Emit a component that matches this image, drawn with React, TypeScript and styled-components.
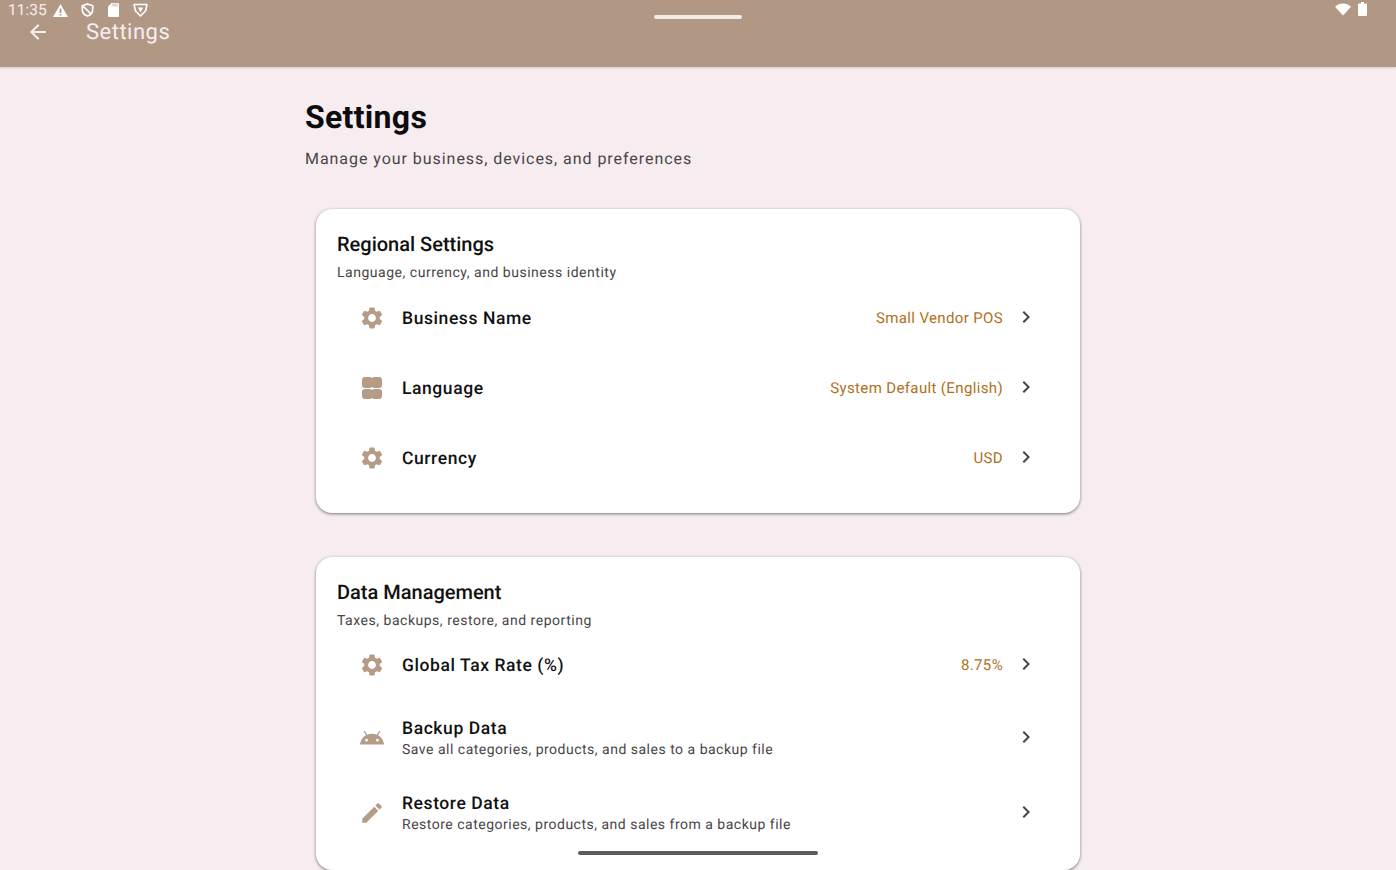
import React from 'react';
import styled, { createGlobalStyle } from 'styled-components';
import { MdAndroid, MdArrowBack, MdChevronRight, MdEdit, MdSettings } from 'react-icons/md';

const GlobalStyle = createGlobalStyle`
html, body {
  margin: 0;
  height: 100%;
  overflow: hidden;
  background: #f7edf1;
  font-family: Roboto, "Liberation Sans", sans-serif;
  text-rendering: geometricPrecision;
}
`;

const Screen = styled.div`
position: relative;
height: 870px;
overflow: hidden;
`;

const AppBar = styled.header`
position: relative;
height: 67px;
background: #b09884;
box-shadow: 0 1px 2px rgba(0, 0, 0, 0.15);
box-sizing: border-box;
padding: 20px 0 0 26px;
display: flex;
align-items: flex-start;
gap: 36px;
color: #f7edf1;
`;

const BackIcon = styled(MdArrowBack)`
width: 24px;
height: 24px;
flex: none;
`;

const AppBarTitle = styled.div`
font-size: 22px;
line-height: 24px;
letter-spacing: 0.5px;
margin-top: 1px;
`;

const StatusLeft = styled.div`
position: absolute;
left: 8px;
top: 0;
height: 20px;
display: flex;
align-items: center;
color: #fff;
`;

const Clock = styled.span`
font-size: 15.5px;
margin-right: 6px;
color: #f7edf1;
`;

const StatusSlot = styled.svg<{ $gap?: number }>`
display: block;
margin-right: ${p => p.$gap ?? 0}px;
`;

const StatusRight = styled.div`
position: absolute;
right: 29px;
top: 2px;
display: flex;
align-items: center;
gap: 7px;
`;

const TopPill = styled.div`
position: absolute;
left: 654px;
top: 15px;
width: 88px;
height: 4px;
border-radius: 2px;
background: #f3ebe8;
`;

const HomeHandle = styled.div`
position: absolute;
left: 578px;
top: 851px;
width: 240px;
height: 4px;
border-radius: 2px;
background: #5c5c5c;
`;

const Content = styled.main`
width: 786px;
margin: 0 auto;
padding-top: 31px;
`;

const PageTitle = styled.h1`
margin: 0;
font-size: 32px;
line-height: 38px;
font-weight: 700;
letter-spacing: 0.3px;
color: #0c0c0c;
`;

const PageSubtitle = styled.p`
margin: 12.4px 0 0;
font-size: 16px;
line-height: 22px;
letter-spacing: 0.95px;
color: #4a4448;
`;

const Card = styled.section`
margin: 39px 11px 44px;
background: #fff;
border-radius: 16px;
padding: 21px 21px 20px;
box-shadow: 0 1px 3px 1px rgba(0, 0, 0, 0.2), 0 1px 2px rgba(0, 0, 0, 0.25);

& + & {
  margin-top: 44px;
}
`;

const CardTitle = styled.h2`
margin: 0;
font-size: 20px;
line-height: 28px;
font-weight: 500;
color: #111;
`;

const CardSubtitle = styled.p`
margin: 5px 0 -0.5px;
font-size: 14px;
line-height: 20px;
letter-spacing: 0.52px;
color: #4a4448;
`;

const Row = styled.div<{ $tall?: boolean }>`
height: ${p => (p.$tall ? 75 : 70)}px;
display: flex;
align-items: center;
padding: 0 21px 0 16px;
`;

const RowIcon = styled.div`
width: 38px;
margin-right: 11px;
display: flex;
justify-content: center;
color: #b59c87;
flex: none;

svg {
  display: block;
  width: 26px;
  height: 26px;
}
`;

const RowText = styled.div`
flex: 1;
min-width: 0;
margin-top: 2px;
`;

const RowLabel = styled.div`
font-size: 17.5px;
line-height: 22px;
font-weight: 500;
letter-spacing: 0.58px;
color: #111;
`;

const RowHint = styled.div`
font-size: 14px;
line-height: 20px;
letter-spacing: 0.5px;
color: #4a4448;
`;

const RowValue = styled.span`
font-size: 15px;
letter-spacing: 0.36px;
color: #b0701b;
margin-right: 11px;
`;

const Chevron = styled(MdChevronRight)`
width: 24px;
height: 24px;
color: #4a4448;
flex: none;
margin-top: -2px;
`;

const TilesIcon = () => (
  <svg viewBox="0 0 26 26" fill="currentColor">
    <rect x="3" y="2" width="10.500" height="11" rx="3" />
    <rect x="12.500" y="2" width="10.500" height="11" rx="3" />
    <rect x="3" y="14" width="10.500" height="10" rx="3" />
    <rect x="12.500" y="14" width="10.500" height="10" rx="3" />
  </svg>
);

type RowData = {
  icon: React.ReactNode;
  label: string;
  hint?: string;
  value?: string;
};

const regional: RowData[] = [
  { icon: <MdSettings />, label: 'Business Name', value: 'Small Vendor POS' },
  { icon: <TilesIcon />, label: 'Language', value: 'System Default (English)' },
  { icon: <MdSettings />, label: 'Currency', value: 'USD' },
];

const data: RowData[] = [
  { icon: <MdSettings />, label: 'Global Tax Rate (%)', value: '8.75%' },
  { icon: <MdAndroid />, label: 'Backup Data', hint: 'Save all categories, products, and sales to a backup file' },
  { icon: <MdEdit />, label: 'Restore Data', hint: 'Restore categories, products, and sales from a backup file' },
];

const SettingsRow: React.FC<RowData> = ({ icon, label, hint, value }) => (
  <Row $tall={!!hint}>
    <RowIcon>{icon}</RowIcon>
    <RowText>
      <RowLabel>{label}</RowLabel>
      {hint && <RowHint>{hint}</RowHint>}
    </RowText>
    {value && <RowValue>{value}</RowValue>}
    <Chevron />
  </Row>
);

export default function App() {
  return (
    <Screen>
      <GlobalStyle />
      <AppBar>
        <BackIcon />
        <AppBarTitle>Settings</AppBarTitle>
        <StatusLeft>
          <Clock>11:35</Clock>
          <StatusSlot $gap={13} width="15" height="13" viewBox="0 0 15 13">
            <path fill="#fff" fillRule="evenodd" d="M7.500 0L15 13H0zM6.600 4.500v4.500h1.800V4.500zM6.600 10v1.600h1.800V10z" />
          </StatusSlot>
          <StatusSlot $gap={14} width="13" height="14" viewBox="0 0 13 14">
            <path fill="none" stroke="#fff" strokeWidth="1.700" d="M6.500 1l5.200 1.800v4c0 3-2 5.200-5.200 6.200-3.200-1-5.200-3.200-5.200-6.200v-4zM2.500 3.500l7.500 7.500" />
          </StatusSlot>
          <StatusSlot $gap={14} width="11" height="14" viewBox="0 0 11 14">
            <path fill="#fff" d="M3.500 0h6.500a1 1 0 0 1 1 1v12a1 1 0 0 1-1 1H1a1 1 0 0 1-1-1V3.500z" />
            <path stroke="#b09884" strokeWidth="0.800" d="M5 0.500v3M7 0.500v3M9 0.500v3" />
          </StatusSlot>
          <StatusSlot width="15" height="14" viewBox="0 0 15 14">
            <path fill="none" stroke="#fff" strokeWidth="1.600" strokeLinejoin="round" d="M1 1.500h13L12.500 8l-5 5-5-5z" />
            <path fill="#fff" d="M4.800 4.500h5.400L7.500 9.500z" />
          </StatusSlot>
        </StatusLeft>
        <TopPill />
        <StatusRight>
          <svg width="16" height="13" viewBox="0 0 17 13">
            <path fill="#fff" d="M0 3.500C2.300 1.300 5.200 0 8.500 0S14.700 1.300 17 3.500L8.500 13z" />
          </svg>
          <svg width="9" height="14" viewBox="0 0 9 14">
            <path fill="#fff" d="M3 0h3v1.500h2a1 1 0 0 1 1 1V13a1 1 0 0 1-1 1H1a1 1 0 0 1-1-1V2.500a1 1 0 0 1 1-1h2z" />
          </svg>
        </StatusRight>
      </AppBar>
      <Content>
        <PageTitle>Settings</PageTitle>
        <PageSubtitle>Manage your business, devices, and preferences</PageSubtitle>
        <Card>
          <CardTitle>Regional Settings</CardTitle>
          <CardSubtitle>Language, currency, and business identity</CardSubtitle>
          {regional.map(r => <SettingsRow key={r.label} {...r} />)}
        </Card>
        <Card>
          <CardTitle>Data Management</CardTitle>
          <CardSubtitle>Taxes, backups, restore, and reporting</CardSubtitle>
          {data.map(r => <SettingsRow key={r.label} {...r} />)}
        </Card>
      </Content>
      <HomeHandle />
    </Screen>
  );
}
